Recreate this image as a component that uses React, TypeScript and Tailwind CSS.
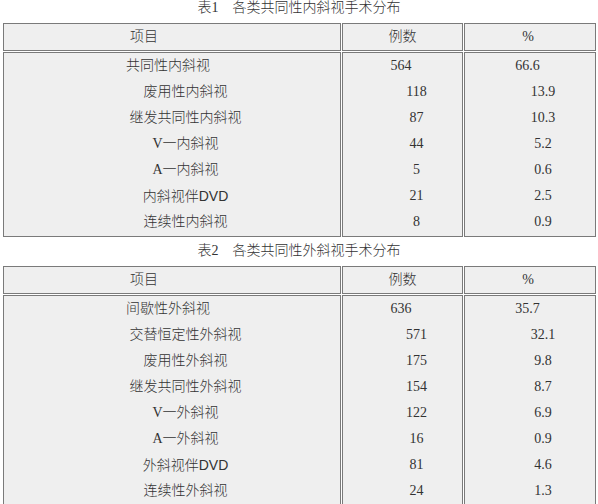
import React from 'react';

type Row = { name: string; count: string; pct: string };

const tables: { title: string; rows: Row[] }[] = [
  {
    title: '表1　各类共同性内斜视手术分布',
    rows: [
      { name: '共同性内斜视', count: '564', pct: '66.6' },
      { name: '废用性内斜视', count: '118', pct: '13.9' },
      { name: '继发共同性内斜视', count: '87', pct: '10.3' },
      { name: 'V一内斜视', count: '44', pct: '5.2' },
      { name: 'A一内斜视', count: '5', pct: '0.6' },
      { name: '内斜视伴DVD', count: '21', pct: '2.5' },
      { name: '连续性内斜视', count: '8', pct: '0.9' },
    ],
  },
  {
    title: '表2　各类共同性外斜视手术分布',
    rows: [
      { name: '间歇性外斜视', count: '636', pct: '35.7' },
      { name: '交替恒定性外斜视', count: '571', pct: '32.1' },
      { name: '废用性外斜视', count: '175', pct: '9.8' },
      { name: '继发共同性外斜视', count: '154', pct: '8.7' },
      { name: 'V一外斜视', count: '122', pct: '6.9' },
      { name: 'A一外斜视', count: '16', pct: '0.9' },
      { name: '外斜视伴DVD', count: '81', pct: '4.6' },
      { name: '连续性外斜视', count: '24', pct: '1.3' },
    ],
  },
];

// "DVD" is drawn in a sans face in the source, the rest in a serif-ish one
const Name: React.FC<{ text: string }> = ({ text }) => (
  <>
    {text.split(/(DVD)/).map((part, i) =>
      part === 'DVD' ? (
        <span key={i} className="font-['Liberation_Sans','Noto_Sans_CJK_SC',sans-serif]">
          {part}
        </span>
      ) : (
        <React.Fragment key={i}>{part}</React.Fragment>
      )
    )}
  </>
);

const cell = 'border border-[#7a7a7a] bg-[#efefef]';

const Table: React.FC<{ rows: Row[] }> = ({ rows }) => (
  <div className="ml-[3px] grid grid-cols-[338px_121px_132px] gap-[1px]">
    {/* header */}
    <div className={`${cell} h-[28px] leading-[26px] text-center pr-[56px]`}>项目</div>
    <div className={`${cell} h-[28px] leading-[26px] text-center`}>例数</div>
    <div className={`${cell} h-[28px] leading-[26px] text-center pr-[4px]`}>%</div>

    {/* body: one tall row, every column a stack of lines */}
    <div className={`${cell} pb-[1px]`}>
      {rows.map((r, i) => (
        <div
          key={i}
          className={`h-[26px] leading-[26px] text-center ${i === 0 ? 'pr-[8px]' : 'pl-[27px]'}`}
        >
          <Name text={r.name} />
        </div>
      ))}
    </div>
    <div className={`${cell} pb-[1px]`}>
      {rows.map((r, i) => (
        <div
          key={i}
          className={`h-[26px] leading-[26px] text-center ${i === 0 ? 'pr-[3px]' : 'pl-[28px]'}`}
        >
          {r.count}
        </div>
      ))}
    </div>
    <div className={`${cell} pb-[1px]`}>
      {rows.map((r, i) => (
        <div
          key={i}
          className={`h-[26px] leading-[26px] text-center ${i === 0 ? 'pr-[5px]' : 'pl-[26px]'}`}
        >
          {r.pct}
        </div>
      ))}
    </div>
  </div>
);

const App: React.FC = () => {
  return (
    <div className="w-[598px] h-[504px] overflow-hidden bg-white text-[14px] font-light text-[#333] font-['Liberation_Serif','Noto_Sans_CJK_SC',serif]">
      {tables.map((t, i) => (
        <div key={i} className={i > 0 ? 'pt-[6px]' : ''}>
          <div className="h-[16px] leading-[16px] mb-[7px] text-center">{t.title}</div>
          <Table rows={t.rows} />
        </div>
      ))}
    </div>
  );
};

export default App;
